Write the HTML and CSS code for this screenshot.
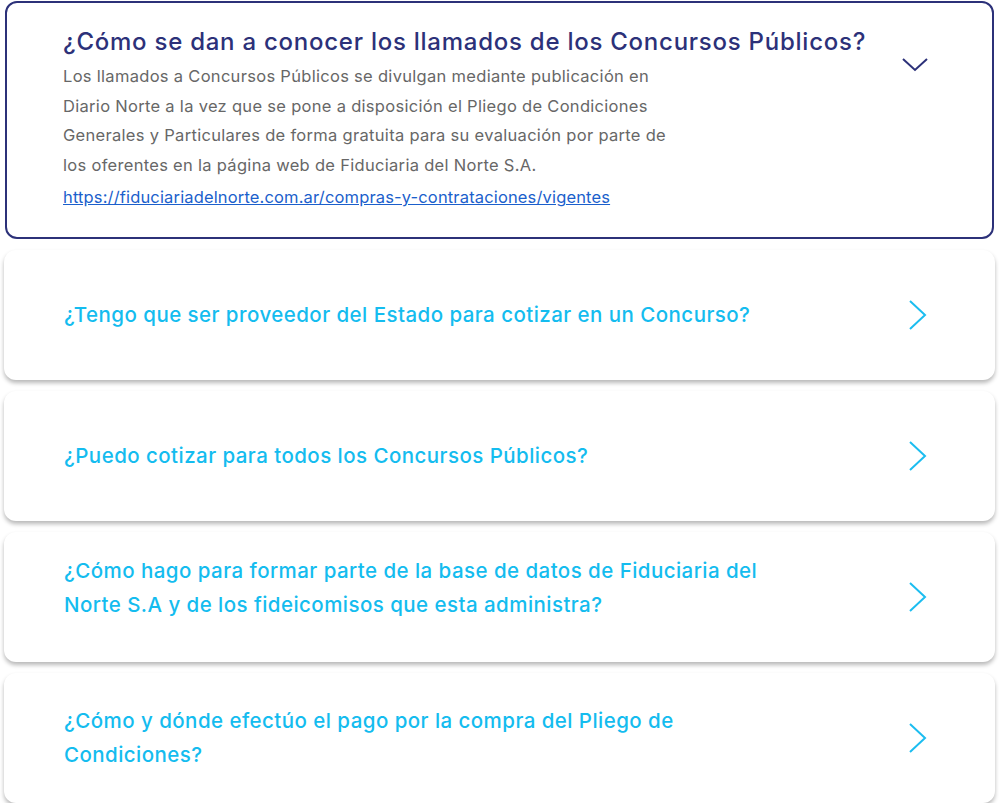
FILE: index.html
```html
<!DOCTYPE html>
<html lang="es">
<head>
<meta charset="utf-8">
<title>Preguntas frecuentes</title>
<link rel="stylesheet" href="styles.css">
</head>
<body>
<div class="faq">
  <div class="item open">
    <div class="item-text">
      <h2 class="q-open">¿Cómo se dan a conocer los llamados de los Concursos Públicos?</h2>
      <p class="answer">Los llamados a Concursos Públicos se divulgan mediante publicación en<br>Diario Norte a la vez que se pone a disposición el Pliego de Condiciones<br>Generales y Particulares de forma gratuita para su evaluación por parte de<br>los oferentes en la página web de Fiduciaria del Norte S.A.</p>
      <a class="link" href="#">https://fiduciariadelnorte.com.ar/compras-y-contrataciones/vigentes</a>
    </div>
    <svg class="chev-down" width="26" height="14" viewBox="0 0 26 14"><path d="M1 1 L13 12 L25 1" fill="none" stroke="#2c3179" stroke-width="2"/></svg>
  </div>
  <div class="item">
    <div class="item-text"><h3 class="q">¿Tengo que ser proveedor del Estado para cotizar en un Concurso?</h3></div>
    <svg class="chev-right" width="18" height="30" viewBox="0 0 18 30"><path d="M1 1 L16 15 L1 29" fill="none" stroke="#1cbdf0" stroke-width="2"/></svg>
  </div>
  <div class="item">
    <div class="item-text"><h3 class="q">¿Puedo cotizar para todos los Concursos Públicos?</h3></div>
    <svg class="chev-right" width="18" height="30" viewBox="0 0 18 30"><path d="M1 1 L16 15 L1 29" fill="none" stroke="#1cbdf0" stroke-width="2"/></svg>
  </div>
  <div class="item">
    <div class="item-text lift"><h3 class="q">¿Cómo hago para formar parte de la base de datos de Fiduciaria del<br>Norte S.A y de los fideicomisos que esta administra?</h3></div>
    <svg class="chev-right" width="18" height="30" viewBox="0 0 18 30"><path d="M1 1 L16 15 L1 29" fill="none" stroke="#1cbdf0" stroke-width="2"/></svg>
  </div>
  <div class="item">
    <div class="item-text"><h3 class="q">¿Cómo y dónde efectúo el pago por la compra del Pliego de<br>Condiciones?</h3></div>
    <svg class="chev-right" width="18" height="30" viewBox="0 0 18 30"><path d="M1 1 L16 15 L1 29" fill="none" stroke="#1cbdf0" stroke-width="2"/></svg>
  </div>
</div>
</body>
</html>
```

FILE: styles.css
```css
* { box-sizing: border-box; }
html, body { margin: 0; padding: 0; background: #ffffff; }
body { font-family: "Inter", "DejaVu Sans", sans-serif; }

.faq {
  display: flex;
  flex-direction: column;
  gap: 11px;
  padding: 1px 4px 0 4px;
  width: 999px;
}

.item {
  display: flex;
  align-items: center;
  justify-content: space-between;
  background: #fff;
  border-radius: 12px;
  box-shadow: 0 3px 4px rgba(0, 0, 0, 0.28);
  height: 130px;
  padding: 0 68px 0 60px;
}

.item.open {
  height: 238px;
  margin: 0 1px;
  border: 2px solid #2c3179;
  box-shadow: none;
  align-items: flex-start;
  padding: 24px 64px 0 56px;
}

.item-text.lift { margin-bottom: 18px; }

.q-open {
  margin: 0;
  font-size: 24px;
  line-height: 30px;
  font-weight: 500;
  color: #2c3179;
  letter-spacing: 0.75px;
}

.answer {
  margin: 5px 0 0 0;
  font-size: 16.5px;
  line-height: 29.5px;
  color: #676767;
  letter-spacing: 0.3px;
}

.link {
  display: block;
  margin-top: 2px;
  font-size: 16.5px;
  line-height: 30px;
  color: #1b5fcc;
  text-decoration: underline;
  letter-spacing: 0.15px;
}

.chev-down { margin-top: 31px; }

.q {
  margin: 0;
  font-size: 20.5px;
  line-height: 34px;
  font-weight: 500;
  color: #14bcef;
  letter-spacing: 0.45px;
}

.chev-right { flex: none; }
```
